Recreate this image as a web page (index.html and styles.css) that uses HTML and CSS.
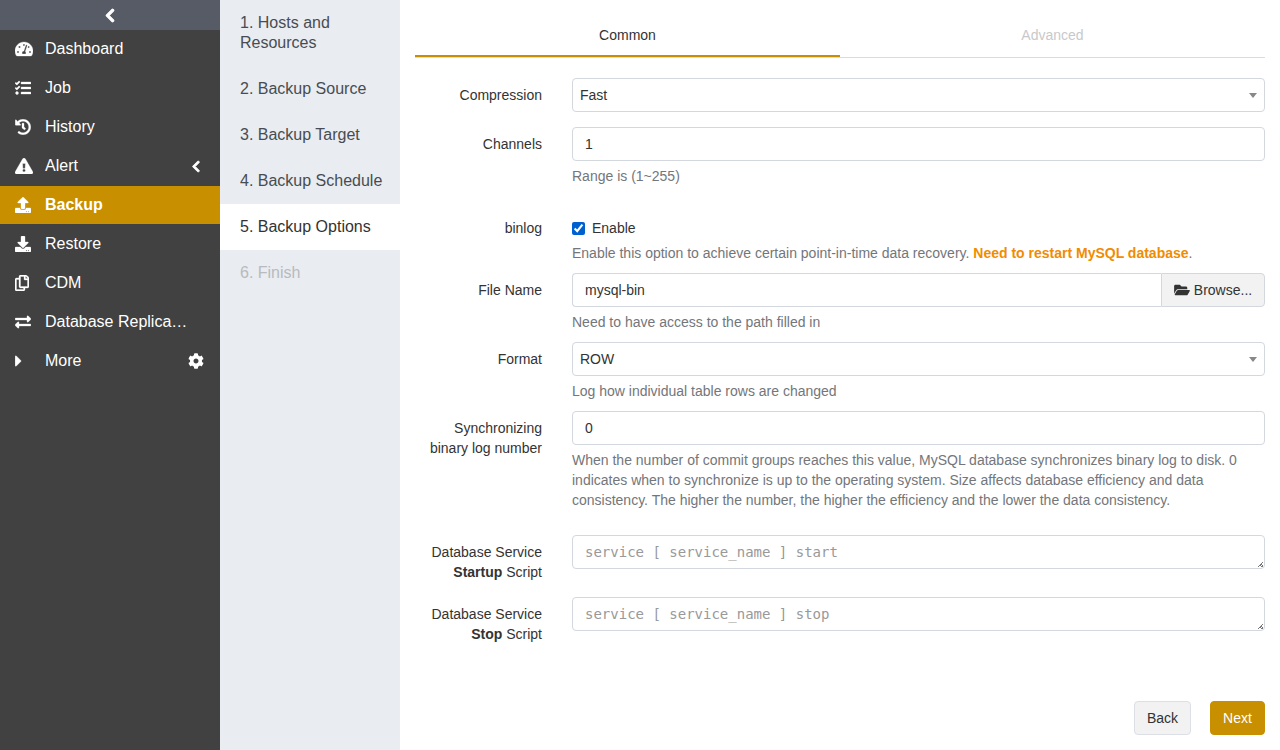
FILE: index.html
```html
<!DOCTYPE html>
<html lang="en">
<head>
<meta charset="utf-8">
<title>Backup Options</title>
<link rel="stylesheet" href="styles.css">
</head>
<body>
<div class="app">
  <nav class="sidebar">
    <div class="collapse"><svg class="ic-chev" viewBox="0 0 320 512"><path d="M34.52 239.03L228.87 44.69c9.37-9.37 24.57-9.37 33.94 0l22.67 22.67c9.36 9.36 9.37 24.52.04 33.9L131.49 256l154.02 154.75c9.34 9.38 9.32 24.54-.04 33.9l-22.67 22.67c-9.37 9.37-24.57 9.37-33.94 0L34.52 272.97c-9.37-9.37-9.37-24.57 0-33.94z"/></svg></div>
    <ul class="menu">
      <li class="item"><span class="icon"><svg viewBox="0 0 576 512"><path d="M288 32C128.94 32 0 160.94 0 320c0 52.8 14.25 102.26 39.06 144.8 5.61 9.62 16.3 15.2 27.44 15.2h443c11.14 0 21.83-5.58 27.44-15.2C561.75 422.26 576 372.8 576 320c0-159.06-128.94-288-288-288zm0 64c14.71 0 26.58 10.13 30.32 23.65-1.11 2.26-2.64 4.23-3.45 6.67l-9.22 27.67c-5.13 3.49-10.97 6.01-17.64 6.01-17.67 0-32-14.33-32-32S270.33 96 288 96zM96 384c-17.67 0-32-14.33-32-32s14.33-32 32-32 32 14.33 32 32-14.33 32-32 32zm48-160c-17.67 0-32-14.33-32-32s14.33-32 32-32 32 14.33 32 32-14.33 32-32 32zm246.77-72.41l-61.33 184C343.13 347.33 352 364.54 352 384c0 11.72-3.38 22.55-8.88 32H232.88c-5.5-9.45-8.88-20.28-8.88-32 0-33.94 26.5-61.43 59.9-63.59l61.34-184.01c4.17-12.56 17.73-19.45 30.36-15.17 12.57 4.19 19.35 17.79 15.17 30.36zm14.66 57.2l15.52-46.55c3.47-1.29 7.13-2.23 11.05-2.23 17.67 0 32 14.33 32 32s-14.33 32-32 32c-11.38-.01-20.89-6.28-26.57-15.22zM480 384c-17.67 0-32-14.33-32-32s14.33-32 32-32 32 14.33 32 32-14.33 32-32 32z"/></svg></span><span class="label">Dashboard</span></li>
      <li class="item"><span class="icon"><svg viewBox="0 0 512 512"><path d="M139.61 35.5a12 12 0 0 0-17 0L58.93 98.81l-22.7-22.12a12 12 0 0 0-17 0L3.53 92.41a12 12 0 0 0 0 17l47.59 47.4a12.78 12.78 0 0 0 17.61 0l15.59-15.62L156.52 69a12.09 12.09 0 0 0 .09-17zm0 159.19a12 12 0 0 0-17 0l-63.68 63.72-22.7-22.1a12 12 0 0 0-17 0L3.53 252a12 12 0 0 0 0 17L51 316.5a12.77 12.77 0 0 0 17.6 0l15.7-15.69 72.2-72.22a12 12 0 0 0 .09-16.9zM64 368c-26.49 0-48.59 21.5-48.59 48S37.53 464 64 464a48 48 0 0 0 0-96zm432 16H208a16 16 0 0 0-16 16v32a16 16 0 0 0 16 16h288a16 16 0 0 0 16-16v-32a16 16 0 0 0-16-16zm0-320H208a16 16 0 0 0-16 16v32a16 16 0 0 0 16 16h288a16 16 0 0 0 16-16V80a16 16 0 0 0-16-16zm0 160H208a16 16 0 0 0-16 16v32a16 16 0 0 0 16 16h288a16 16 0 0 0 16-16v-32a16 16 0 0 0-16-16z"/></svg></span><span class="label">Job</span></li>
      <li class="item"><span class="icon"><svg viewBox="0 0 512 512"><path d="M504 255.531c.253 136.64-111.18 248.372-247.82 248.468-59.015.042-113.223-20.53-155.822-54.911-11.077-8.94-11.905-25.541-1.839-35.607l11.267-11.267c8.609-8.609 22.353-9.551 31.891-1.984C173.062 425.135 212.781 440 256 440c101.705 0 184-82.311 184-184 0-101.705-82.311-184-184-184-48.814 0-93.149 18.969-126.068 49.932l50.754 50.754c10.08 10.08 2.941 27.314-11.313 27.314H24c-8.837 0-16-7.163-16-16V38.627c0-14.254 17.234-21.393 27.314-11.314l49.372 49.372C129.209 34.136 189.552 8 256 8c136.81 0 247.747 110.78 248 247.531zm-180.912 78.784l9.823-12.63c8.138-10.463 6.253-25.542-4.21-33.679L288 256.349V152c0-13.255-10.745-24-24-24h-16c-13.255 0-24 10.745-24 24v135.651l65.409 50.874c10.463 8.137 25.541 6.253 33.679-4.21z"/></svg></span><span class="label">History</span></li>
      <li class="item"><span class="icon"><svg viewBox="0 0 576 512"><path d="M569.517 440.013C587.975 472.007 564.806 512 527.94 512H48.054c-36.937 0-59.999-40.055-41.577-71.987L246.423 23.985c18.467-32.009 64.72-31.951 83.154 0l239.94 416.028zM288 354c-25.405 0-46 20.595-46 46s20.595 46 46 46 46-20.595 46-46-20.595-46-46-46zm-43.673-165.346l7.418 136c.347 6.364 5.609 11.346 11.982 11.346h48.546c6.373 0 11.635-4.982 11.982-11.346l7.418-136c.375-6.874-5.098-12.654-11.982-12.654h-63.383c-6.884 0-12.356 5.78-11.981 12.654z"/></svg></span><span class="label">Alert</span><span class="trail"><svg class="ic-small" viewBox="0 0 320 512"><path d="M34.52 239.03L228.87 44.69c9.37-9.37 24.57-9.37 33.94 0l22.67 22.67c9.36 9.36 9.37 24.52.04 33.9L131.49 256l154.02 154.75c9.34 9.38 9.32 24.54-.04 33.9l-22.67 22.67c-9.37 9.37-24.57 9.37-33.94 0L34.52 272.97c-9.37-9.37-9.37-24.57 0-33.94z"/></svg></span></li>
      <li class="item active"><span class="icon"><svg viewBox="0 0 512 512"><path d="M296 384h-80c-13.3 0-24-10.7-24-24V192h-87.7c-17.8 0-26.7-21.5-14.1-34.1L242.3 5.7c7.5-7.5 19.8-7.5 27.3 0l152.2 152.2c12.6 12.6 3.7 34.1-14.1 34.1H320v168c0 13.3-10.7 24-24 24zm216-8v112c0 13.3-10.7 24-24 24H24c-13.3 0-24-10.7-24-24V376c0-13.3 10.7-24 24-24h136v8c0 30.9 25.1 56 56 56h80c30.9 0 56-25.1 56-56v-8h136c13.3 0 24 10.7 24 24zm-124 88c0-11-9-20-20-20s-20 9-20 20 9 20 20 20 20-9 20-20zm64 0c0-11-9-20-20-20s-20 9-20 20 9 20 20 20 20-9 20-20z"/></svg></span><span class="label">Backup</span></li>
      <li class="item"><span class="icon"><svg viewBox="0 0 512 512"><path d="M216 0h80c13.3 0 24 10.7 24 24v168h87.7c17.8 0 26.7 21.5 14.1 34.1L269.7 378.3c-7.5 7.5-19.8 7.5-27.3 0L90.1 226.1c-12.6-12.6-3.7-34.1 14.1-34.1H192V24c0-13.3 10.7-24 24-24zm296 376v112c0 13.3-10.7 24-24 24H24c-13.3 0-24-10.7-24-24V376c0-13.3 10.7-24 24-24h146.7l49 49c20.1 20.1 52.5 20.1 72.6 0l49-49H488c13.3 0 24 10.7 24 24zm-124 88c0-11-9-20-20-20s-20 9-20 20 9 20 20 20 20-9 20-20zm64 0c0-11-9-20-20-20s-20 9-20 20 9 20 20 20 20-9 20-20z"/></svg></span><span class="label">Restore</span></li>
      <li class="item"><span class="icon"><svg viewBox="0 0 448 512"><path d="M433.941 65.941l-51.882-51.882A48 48 0 0 0 348.118 0H176c-26.51 0-48 21.49-48 48v48H48c-26.51 0-48 21.49-48 48v320c0 26.51 21.49 48 48 48h224c26.51 0 48-21.49 48-48v-48h80c26.51 0 48-21.49 48-48V99.882a48 48 0 0 0-14.059-33.941zM266 464H54a6 6 0 0 1-6-6V150a6 6 0 0 1 6-6h74v224c0 26.51 21.49 48 48 48h96v42a6 6 0 0 1-6 6zm128-96H182a6 6 0 0 1-6-6V54a6 6 0 0 1 6-6h106v88c0 13.255 10.745 24 24 24h88v202a6 6 0 0 1-6 6zm6-256h-64V48h9.632c1.591 0 3.117.632 4.243 1.757l48.368 48.368a6 6 0 0 1 1.757 4.243V112z"/></svg></span><span class="label">CDM</span></li>
      <li class="item"><span class="icon"><svg viewBox="0 0 512 512"><path d="M0 168v-16c0-13.255 10.745-24 24-24h360V80c0-21.367 25.899-32.042 40.971-16.971l80 80c9.372 9.373 9.372 24.569 0 33.941l-80 80C409.956 271.982 384 261.456 384 240v-48H24c-13.255 0-24-10.745-24-24zm488 152H128v-48c0-21.314-25.862-32.08-40.971-16.971l-80 80c-9.372 9.373-9.372 24.569 0 33.941l80 80C102.057 463.997 128 453.437 128 432v-48h360c13.255 0 24-10.745 24-24v-16c0-13.255-10.745-24-24-24z"/></svg></span><span class="label ellipsis">Database Replica&hellip;</span></li>
      <li class="item"><span class="icon"><svg class="ic-caret" viewBox="0 0 192 512"><path d="M0 384.662V127.338c0-17.818 21.543-26.741 34.142-14.142l128.662 128.662c7.81 7.81 7.81 20.474 0 28.284L34.142 398.804C21.543 411.404 0 402.48 0 384.662z"/></svg></span><span class="label">More</span><span class="trail"><svg class="ic-cog" viewBox="0 0 512 512"><path d="M487.4 315.7l-42.6-24.6c4.3-23.2 4.3-47 0-70.2l42.6-24.6c4.9-2.8 7.1-8.6 5.5-14-11.1-35.6-30-67.8-54.7-94.6-3.8-4.1-10-5.1-14.8-2.3L380.8 110c-17.9-15.4-38.5-27.3-60.8-35.1V25.8c0-5.6-3.9-10.5-9.4-11.7-36.7-8.2-74.3-7.8-109.2 0-5.5 1.2-9.4 6.1-9.4 11.7V75c-22.2 7.9-42.8 19.8-60.8 35.1L88.7 85.5c-4.9-2.8-11-1.9-14.8 2.3-24.7 26.7-43.6 58.9-54.7 94.6-1.7 5.4.6 11.2 5.5 14L67.3 221c-4.3 23.2-4.3 47 0 70.2l-42.6 24.6c-4.9 2.8-7.1 8.6-5.5 14 11.1 35.6 30 67.8 54.7 94.6 3.8 4.1 10 5.1 14.8 2.3l42.6-24.6c17.9 15.4 38.5 27.3 60.8 35.1v49.2c0 5.6 3.9 10.5 9.4 11.7 36.7 8.2 74.3 7.8 109.2 0 5.5-1.2 9.4-6.1 9.4-11.7v-49.2c22.2-7.9 42.8-19.8 60.8-35.1l42.6 24.6c4.9 2.8 11 1.9 14.8-2.3 24.7-26.7 43.6-58.9 54.7-94.6 1.5-5.5-.7-11.3-5.6-14.1zM256 336c-44.1 0-80-35.9-80-80s35.9-80 80-80 80 35.9 80 80-35.9 80-80 80z"/></svg></span></li>
    </ul>
  </nav>
  <ol class="steps">
    <li class="step">1. Hosts and Resources</li>
    <li class="step">2. Backup Source</li>
    <li class="step">3. Backup Target</li>
    <li class="step">4. Backup Schedule</li>
    <li class="step current">5. Backup Options</li>
    <li class="step disabled">6. Finish</li>
  </ol>
  <main class="main">
    <div class="tabs">
      <div class="tab on">Common</div>
      <div class="tab off">Advanced</div>
    </div>
    <form class="form">
      <div class="row gap15">
        <div class="name">Compression</div>
        <div class="field"><div class="select"><span>Fast</span></div></div>
      </div>
      <div class="row gap32">
        <div class="name">Channels</div>
        <div class="field"><input class="input" type="text" value="1"><p class="help">Range is (1~255)</p></div>
      </div>
      <div class="row gap10">
        <div class="name tight">binlog</div>
        <div class="field">
          <label class="check"><input type="checkbox" checked><span>Enable</span></label>
          <p class="help">Enable this option to achieve certain point-in-time data recovery. <strong class="warn">Need to restart MySQL database</strong>.</p>
        </div>
      </div>
      <div class="row gap10">
        <div class="name">File Name</div>
        <div class="field">
          <div class="group"><input class="input grouped" type="text" value="mysql-bin"><button class="browse" type="button"><svg viewBox="0 0 576 512"><path d="M572.694 292.093L500.27 416.248A63.997 63.997 0 0 1 444.989 448H45.025c-18.523 0-30.064-20.093-20.731-36.093l72.424-124.155A64 64 0 0 1 152 256h399.964c18.523 0 30.064 20.093 20.73 36.093zM152 224h328v-48c0-26.51-21.49-48-48-48H272l-64-64H48C21.49 64 0 85.49 0 112v278.046l69.077-118.418C86.214 242.25 117.989 224 152 224z"/></svg>Browse...</button></div>
          <p class="help">Need to have access to the path filled in</p>
        </div>
      </div>
      <div class="row gap10">
        <div class="name">Format</div>
        <div class="field"><div class="select"><span>ROW</span></div><p class="help">Log how individual table rows are changed</p></div>
      </div>
      <div class="row gap25">
        <div class="name two">Synchronizing binary log number</div>
        <div class="field"><input class="input" type="text" value="0"><p class="help">When the number of commit groups reaches this value, MySQL database synchronizes binary log to disk. 0 indicates when to synchronize is up to the operating system. Size affects database efficiency and data consistency. The higher the number, the higher the efficiency and the lower the data consistency.</p></div>
      </div>
      <div class="row gap15">
        <div class="name two">Database Service <b>Startup</b> Script</div>
        <div class="field"><textarea class="area" placeholder="service [ service_name ] start"></textarea></div>
      </div>
      <div class="row">
        <div class="name two">Database Service <b>Stop</b> Script</div>
        <div class="field"><textarea class="area" placeholder="service [ service_name ] stop"></textarea></div>
      </div>
      <div class="actions">
        <button class="btn back" type="button">Back</button>
        <button class="btn next" type="button">Next</button>
      </div>
    </form>
  </main>
</div>
</body>
</html>
```

FILE: styles.css
```css
* { box-sizing: border-box; }
html, body { margin: 0; padding: 0; height: 100%; overflow: hidden; }
body { font-family: "Liberation Sans", Arial, sans-serif; font-size: 14px; line-height: 20px; color: #333; background: #fff; }
.app { display: flex; width: 1280px; height: 750px; }

.sidebar { width: 220px; flex: none; background: #414141; color: #fff; }
.collapse { height: 30px; background: #565b66; display: flex; align-items: center; justify-content: center; }
.ic-chev { width: 10px; height: 15px; fill: #fff; stroke: #fff; stroke-width: 36; }
.menu { list-style: none; margin: 0; padding: 0; }
.item { height: 38px; margin-bottom: 1px; display: flex; align-items: center; padding: 0 15px; font-size: 16px; line-height: 20px; }
.icon { width: 30px; flex: none; display: flex; align-items: center; }
.icon svg { width: auto; height: 16px; fill: #fff; stroke: #fff; stroke-width: 10; }
.icon .ic-caret { width: 7px; height: 18px; }
.label { min-width: 0; white-space: nowrap; }
.trail { margin-left: auto; display: flex; align-items: center; }
.ic-small { width: 10px; height: 13px; fill: #fff; stroke: #fff; stroke-width: 36; margin-right: 4px; }
.ic-cog { width: 16px; height: 16px; fill: #fff; margin-right: 1px; }
.item.active { background: #c88f00; font-weight: 700; }

.steps { width: 180px; flex: none; list-style: none; margin: 0; padding: 0; background: #e9ecf1; font-size: 16px; line-height: 20px; }
.step { padding: 13px 10px 13px 20px; color: #484c52; }
.step.current { background: #fff; color: #333; }
.step.disabled { color: #b8babd; }
.step:first-child { padding-right: 40px; }

.main { flex: 1; min-width: 0; padding: 0 15px; }
.tabs { display: flex; height: 58px; border-bottom: 1px solid #d8dbe2; }
.tab { width: 425px; display: flex; align-items: center; justify-content: center; padding-top: 14px; border-bottom: 2px solid transparent; color: #333; }
.tab.on { border-bottom-color: #c88f00; }
.tab.off { color: #c8c9cc; }

.form { padding-top: 20px; }
.row { display: grid; grid-template-columns: 127px 693px; column-gap: 30px; }
.gap10 { margin-bottom: 10px; }
.gap15 { margin-bottom: 15px; }
.gap25 { margin-bottom: 25px; }
.gap32 { margin-bottom: 32px; }
.name { text-align: right; padding-top: 7px; color: #333; }
.name.tight { padding-top: 0; }
.name b { font-weight: 700; }
.field { min-width: 0; }
.input, .select { display: block; width: 100%; height: 34px; border: 1px solid #d3d7de; border-radius: 4px; background: #fff; font: 14px/20px "Liberation Sans", Arial, sans-serif; color: #333; }
.input { padding: 6px 12px; outline: 0; }
.select { position: relative; padding: 6px 7px; }
.select::after { content: ""; position: absolute; right: 7px; top: 14px; border: 4px solid transparent; border-top: 5px solid #888; border-bottom: 0; }
.help { margin: 5px 0 0; color: #73767a; }
.warn { color: #f08c00; }
.check { display: flex; align-items: center; height: 20px; color: #333; }
.check input { width: 13px; height: 13px; margin: 0 7px 0 0; accent-color: #0060d0; }
.group { display: flex; }
.grouped { flex: 1; min-width: 0; border-right: 0; border-radius: 4px 0 0 4px; }
.browse { width: 104px; flex: none; height: 34px; display: flex; align-items: center; justify-content: center; gap: 4px; padding: 0; border: 1px solid #d3d7de; border-radius: 0 4px 4px 0; background: #f2f2f2; font: 14px/20px "Liberation Sans", Arial, sans-serif; color: #333; }
.browse svg { width: 16px; height: 14px; fill: #333; }
.area { display: block; width: 100%; height: 34px; padding: 6px 12px; border: 1px solid #d3d7de; border-radius: 4px; outline: 0; resize: none; font: 14px/20px "DejaVu Sans Mono", monospace; color: #333; background: linear-gradient(135deg, transparent 45%, #777 45%, #777 60%, transparent 60%, transparent 75%, #777 75%) no-repeat right 1px bottom 1px / 5px 5px #fff; }
.area::placeholder { color: #999; opacity: 1; }

.actions { display: flex; justify-content: flex-end; gap: 19px; margin-top: 57px; }
.btn { height: 34px; padding: 0; border: 1px solid #dcdfe6; border-radius: 4px; font: 14px/20px "Liberation Sans", Arial, sans-serif; }
.back { width: 57px; background: #f2f2f2; color: #333; }
.next { width: 55px; background: #c88f00; border-color: #c88f00; color: #fff; }
```
